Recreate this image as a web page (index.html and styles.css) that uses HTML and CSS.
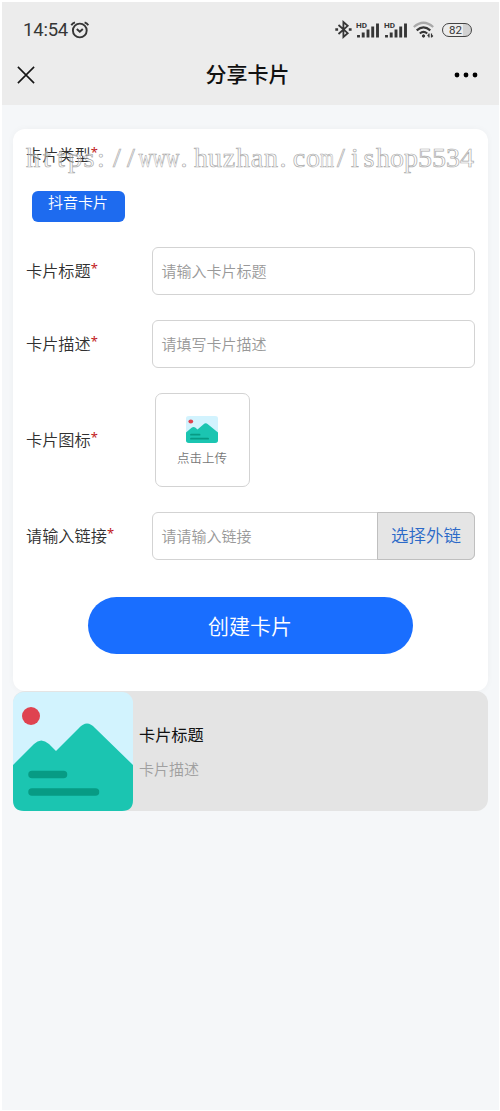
FILE: index.html
```html
<!DOCTYPE html>
<html lang="zh-CN">
<head>
<meta charset="utf-8">
<title>分享卡片</title>
<link rel="stylesheet" href="styles.css">
</head>
<body>
<svg class="defs" width="0" height="0" aria-hidden="true">
  <symbol id="picture" viewBox="0 0 120 119" preserveAspectRatio="none">
    <rect width="120" height="119" rx="11" fill="#d2f3fe"/>
    <path d="M0 73 21 52Q28 45 36 52L43 59 66 36Q74 27 82 36L120 73V108Q120 119 109 119H11Q0 119 0 108Z" fill="#1bc5b1"/>
    <circle cx="18" cy="24" r="9" fill="#df4350"/>
    <path d="M19 82.500H50.500M19 100H82.500" stroke="#079b84" stroke-width="7.500" stroke-linecap="round"/>
  </symbol>
</svg>
<div class="screen">
  <header class="top">
    <div class="status">
      <span class="time">14:54</span>
      <svg class="alarm" width="20" height="18" viewBox="0 0 20 18" fill="none" stroke="#363636" stroke-width="1.900"><circle cx="9.800" cy="9.500" r="6.900"/><path d="m6.800 8 3 2.800 3-2.800M1.300 4.200Q2.500 2.200 5 1.300M18.300 4.200Q17.100 2.200 14.600 1.300"/></svg>
      <div class="indicators">
        <svg class="bluetooth" width="17" height="19" viewBox="0 0 17 19" fill="none" stroke="#363636" stroke-width="1.800"><path d="m3.500 5 9.200 8.200L8.400 17V2l4.300 3.800L3.500 14"/><path d="M.300 9.500h2.800M13.800 9.500h2.800" stroke-width="2.600"/></svg>
        <svg class="signal" width="24" height="18" viewBox="0 0 24 18"><text x="0" y="7" class="hd" textLength="11" lengthAdjust="spacingAndGlyphs">HD</text><path d="M2.500 14v2.500M7.200 11.500v5M12 8.500v8M16.700 5.500v11M21.500 2.500v14" stroke="#363636" stroke-width="2.900"/></svg>
        <svg class="signal" width="24" height="18" viewBox="0 0 24 18"><text x="0" y="7" class="hd" textLength="11" lengthAdjust="spacingAndGlyphs">HD</text><path d="M2.500 14v2.500M7.200 11.500v5M12 8.500v8M16.700 5.500v11M21.500 2.500v14" stroke="#363636" stroke-width="2.900"/></svg>
        <svg class="wifi" width="22" height="18" viewBox="0 0 22 18" fill="none" stroke="#363636" stroke-width="2.200"><path d="M.800 6Q10.500-2.500 20.200 6" stroke="#a9a9a9"/><path d="M3.700 9.300Q10.500 3.500 17.300 9.300M6.800 12.500Q10.500 9.300 14.200 12.500"/><circle cx="10.500" cy="15" r="1.200" fill="#363636" stroke-width="1"/><path d="M16 12.500v4M18.500 12.500v4M14.600 15l1.400-1.500M18.500 16l1.400-1.500" stroke-width="1.200"/></svg>
        <span class="battery">82</span>
      </div>
    </div>
    <div class="nav">
      <svg width="18" height="18" viewBox="0 0 18 18" stroke="#161616" stroke-width="1.600"><path d="m.900.900 16.200 16.200M17.100.900.900 17.100"/></svg>
      <h1>分享卡片</h1>
      <svg class="more" width="24" height="6" viewBox="0 0 24 6"><circle cx="3" cy="3" r="2.400"/><circle cx="12" cy="3" r="2.400"/><circle cx="21" cy="3" r="2.400"/></svg>
    </div>
  </header>
  <main>
    <form class="card">
      <div class="type">
        <span class="label">卡片类型<b>*</b></span>
        <svg class="watermark" width="450" height="34"><text y="25.500"><tspan x="7 21 35 49 63 75 91 105">https://</tspan><tspan x="133" textLength="41" lengthAdjust="spacingAndGlyphs">www</tspan><tspan x="158 175 189 203 217 231 245 257 273 287">.huzhan.co</tspan><tspan x="301" textLength="14" lengthAdjust="spacingAndGlyphs">m</tspan><tspan x="315 329 343 357 371 385 399 413 427 441">/ishop5534</tspan></text></svg>
      </div>
      <button type="button" class="tag">抖音卡片</button>
      <div class="row"><span class="label">卡片标题<b>*</b></span><div class="field"><span>请输入卡片标题</span></div></div>
      <div class="row"><span class="label">卡片描述<b>*</b></span><div class="field"><span>请填写卡片描述</span></div></div>
      <div class="row"><span class="label">卡片图标<b>*</b></span>
        <div class="upload"><svg width="32" height="27"><use href="#picture"/></svg><span>点击上传</span></div>
      </div>
      <div class="row"><span class="label">请输入链接<b>*</b></span>
        <div class="field group"><span>请请输入链接</span><button type="button" class="choose">选择外链</button></div>
      </div>
      <button type="button" class="submit">创建卡片</button>
    </form>
    <section class="preview">
      <svg width="120" height="119"><use href="#picture"/></svg>
      <div class="copy"><h2>卡片标题</h2><p>卡片描述</p></div>
    </section>
  </main>
</div>
</body>
</html>
```

FILE: styles.css
```css
* { box-sizing: border-box; }
body {
  margin: 0;
  padding: 2px 1px 1px 2px;
  background: #fff;
  font-family: "Noto Sans CJK SC", sans-serif;
  font-weight: 350;
}
button { font: inherit; border: 0; padding: 0; }
h1, h2, p { margin: 0; }
svg { display: block; flex: none; }
.defs { position: absolute; }
.screen { height: 1108px; background: #f5f7f9; }
.top { height: 103px; background: #ececec; }
.status {
  display: flex;
  align-items: center;
  height: 54px;
  padding: 1px 27px 0 21px;
}
.time {
  width: 45px;
  font: 400 18.5px/22px Roboto, sans-serif;
  letter-spacing: -0.2px;
  color: #363636;
  white-space: nowrap;
}
.alarm { margin-left: 2px; }
.indicators { display: flex; align-items: center; margin-left: auto; }
.signal { margin-left: 4px; }
.hd { font: 700 8px Roboto, sans-serif; fill: #363636; }
.wifi { margin-left: 5px; }
.battery {
  width: 30px;
  height: 14px;
  margin-left: 7px;
  padding-right: 3px;
  border: 1.5px solid #444;
  border-radius: 7px;
  background: linear-gradient(90deg, #ececec 72%, #d2d2d2 72%);
  font: 400 11.5px/12px Roboto, sans-serif;
  text-align: center;
  color: #363636;
}
.nav {
  display: flex;
  align-items: center;
  justify-content: space-between;
  height: 37px;
  padding: 0 21px 0 15px;
}
.nav h1 {
  margin: -3px 0 0 6px;
  font-size: 21px;
  font-weight: 500;
  line-height: 30px;
  color: #111;
}
main { padding: 24px 11px 0; }
.card {
  height: 562px;
  padding: 12px 13px 0;
  border-radius: 12px;
  background: #fff;
  box-shadow: 0 0 7px rgba(0, 0, 0, .035);
}
.type { position: relative; height: 50px; }
.label {
  width: 126px;
  flex: none;
  padding-bottom: 2px;
  font-size: 16.2px;
  line-height: 26px;
  color: #303030;
  white-space: nowrap;
}
.label b {
  font: 400 13px/1 "Noto Sans", sans-serif;
  vertical-align: 4px;
  color: #c11920;
}
.type .label { display: block; }
.watermark {
  position: absolute;
  left: 0;
  top: 0;
  overflow: visible;
}
.watermark text {
  font: 400 28px "Liberation Serif", serif;
  text-anchor: middle;
  fill: rgba(255, 255, 255, .35);
  stroke: #aaa;
  stroke-width: .7px;
}
.tag {
  display: block;
  width: 93px;
  height: 31px;
  margin-left: 6px;
  padding: 0 1px 9px 0;
  border-radius: 6px;
  background: #1e6bef;
  color: #fff;
  font-size: 15px;
  line-height: 22px;
}
.row { display: flex; align-items: center; margin-top: 25px; }
.field {
  display: flex;
  align-items: center;
  width: 324px;
  height: 48px;
  padding-left: 8.5px;
  border: 1px solid #d3d3d3;
  border-radius: 6px;
  color: #999;
  font-size: 15px;
}
.field > span { padding-bottom: 2px; }
.upload {
  display: flex;
  flex-direction: column;
  align-items: center;
  width: 95px;
  height: 94px;
  margin-left: 3px;
  padding: 22px 1px 0 0;
  border: 1px solid #d3d3d3;
  border-radius: 7px;
  color: #777;
  font-size: 12.5px;
  line-height: 18px;
}
.upload span { margin-top: 6px; }
.group { justify-content: space-between; }
.choose {
  width: 98px;
  height: 48px;
  margin-right: -1px;
  padding-bottom: 4px;
  border: 1px solid #bfbfbf;
  border-radius: 0 6px 6px 0;
  background: #e5e5e5;
  color: #2c6ac8;
  font-size: 17.5px;
}
.submit {
  display: block;
  width: 325px;
  height: 57px;
  margin: 37px auto 0;
  padding: 0 1px 2px 0;
  border-radius: 29px;
  background: #196eff;
  color: #fff;
  font-size: 21px;
}
.preview {
  display: flex;
  height: 120px;
  border-radius: 12px;
  background: #e4e4e4;
}
.preview > svg { margin-top: 1px; }
.copy { padding: 30px 0 0 6px; }
.copy h2 { font-size: 16.2px; font-weight: 400; line-height: 27px; color: #111; }
.copy p { margin-top: 9px; font-size: 15px; line-height: 24px; color: #a0a0a0; }
```
